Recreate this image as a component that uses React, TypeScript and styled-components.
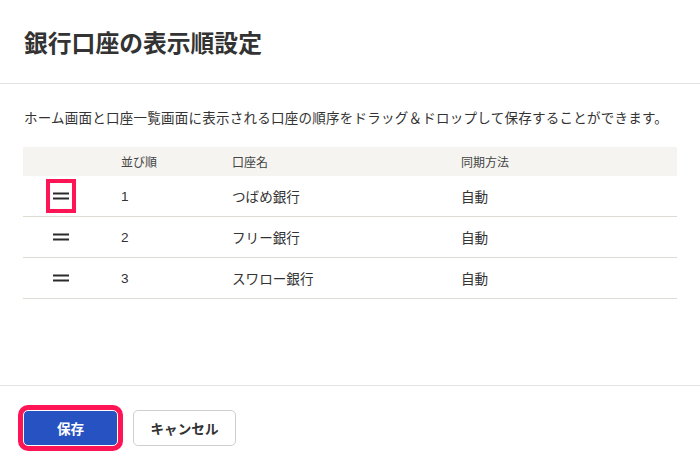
import React from 'react';
import styled, { createGlobalStyle } from 'styled-components';

interface Account {
  order: number
  name: string
  sync: string
}

const GlobalStyle = createGlobalStyle`
  html, body {
    margin: 0;
    padding: 0;
    background: #fff;
  }
  body {
    font-family: "Liberation Sans", "Noto Sans CJK JP", sans-serif;
    color: #333;
  }
`;

const Modal = styled.div`
  width: 700px;
  height: 470px;
  display: flex;
  flex-direction: column;
  background: #fff;
`;

const Header = styled.header`
  height: 84px;
  box-sizing: border-box;
  display: flex;
  align-items: center;
  padding: 0 24px;
  border-bottom: 1px solid #e3e3e3;
`;

const Title = styled.h1`
  margin: 0;
  font-size: 23.8px;
  font-weight: 700;
  color: #333;
`;

const Body = styled.div`
  flex: 1;
  padding: 24px 23px 0;
`;

const Description = styled.p`
  margin: 0 0 17px 1px;
  font-size: 13.5px;
  letter-spacing: 0.25px;
  line-height: 22px;
  color: #333;
  white-space: nowrap;
`;

const Table = styled.div`
  display: grid;
  grid-template-columns: 74px 111px 229px 1fr;
`;

const HeadCell = styled.div<{ $center?: boolean }>`
  height: 29px;
  display: flex;
  align-items: center;
  justify-content: ${p => (p.$center ? 'center' : 'flex-start')};
  padding-left: ${p => (p.$center ? '0' : '24px')};
  background: #f5f4f0;
  font-size: 12px;
  color: #444;
`;

const Cell = styled.div<{ $center?: boolean }>`
  height: 40px;
  display: flex;
  align-items: center;
  justify-content: ${p => (p.$center ? 'center' : 'flex-start')};
  padding-left: ${p => (p.$center ? '0' : '24px')};
  border-bottom: 1px solid #dedbd2;
  font-size: 13.6px;
  color: #333;
`;

const Handle = styled.button<{ $focused?: boolean }>`
  width: ${p => (p.$focused ? '30px' : '22px')};
  height: ${p => (p.$focused ? '34px' : '22px')};
  box-sizing: border-box;
  margin-left: 2px;
  display: flex;
  align-items: center;
  justify-content: center;
  padding: 0;
  background: #fff;
  border: ${p => (p.$focused ? '4px solid #ff1455' : 'none')};
  cursor: grab;
`;

const Footer = styled.footer`
  height: 85px;
  box-sizing: border-box;
  border-top: 1px solid #e3e3e3;
  display: flex;
  align-items: flex-start;
  gap: 15px;
  padding: 24px 0 0 22px;
`;

const Button = styled.button<{ $primary?: boolean }>`
  height: 36px;
  min-width: ${p => (p.$primary ? '95px' : '103px')};
  border-radius: 5px;
  font-family: inherit;
  font-size: 13.6px;
  font-weight: 700;
  cursor: pointer;
  color: ${p => (p.$primary ? '#fff' : '#333')};
  background: ${p => (p.$primary ? '#2752c1' : '#fff')};
  border: 1px solid ${p => (p.$primary ? '#fff' : '#cfcfcf')};
  box-shadow: ${p => (p.$primary ? '0 0 0 5px #ff1455' : 'none')};
  margin-left: ${p => (p.$primary ? '1px' : '0')};
`;

const DragIcon = () => (
  <svg width="16" height="8" viewBox="0 0 16 8">
    <rect x="0" y="0.5" width="16" height="2" fill="#2b2b2b" />
    <rect x="0" y="5.5" width="16" height="2" fill="#2b2b2b" />
  </svg>
);

const accounts: Account[] = [
  { order: 1, name: 'つばめ銀行', sync: '自動' },
  { order: 2, name: 'フリー銀行', sync: '自動' },
  { order: 3, name: 'スワロー銀行', sync: '自動' }
];

const App = () => {
  return (
    <>
      <GlobalStyle />
      <Modal>
        <Header>
          <Title>銀行口座の表示順設定</Title>
        </Header>
        <Body>
          <Description>
            ホーム画面と口座一覧画面に表示される口座の順序をドラッグ＆ドロップして保存することができます。
          </Description>
          <Table>
            <HeadCell $center />
            <HeadCell>並び順</HeadCell>
            <HeadCell>口座名</HeadCell>
            <HeadCell>同期方法</HeadCell>
            {accounts.map((a, i) => (
              <React.Fragment key={a.order}>
                <Cell $center>
                  <Handle $focused={i === 0}>
                    <DragIcon />
                  </Handle>
                </Cell>
                <Cell>{a.order}</Cell>
                <Cell>{a.name}</Cell>
                <Cell>{a.sync}</Cell>
              </React.Fragment>
            ))}
          </Table>
        </Body>
        <Footer>
          <Button $primary>保存</Button>
          <Button>キャンセル</Button>
        </Footer>
      </Modal>
    </>
  );
};

export default App;
